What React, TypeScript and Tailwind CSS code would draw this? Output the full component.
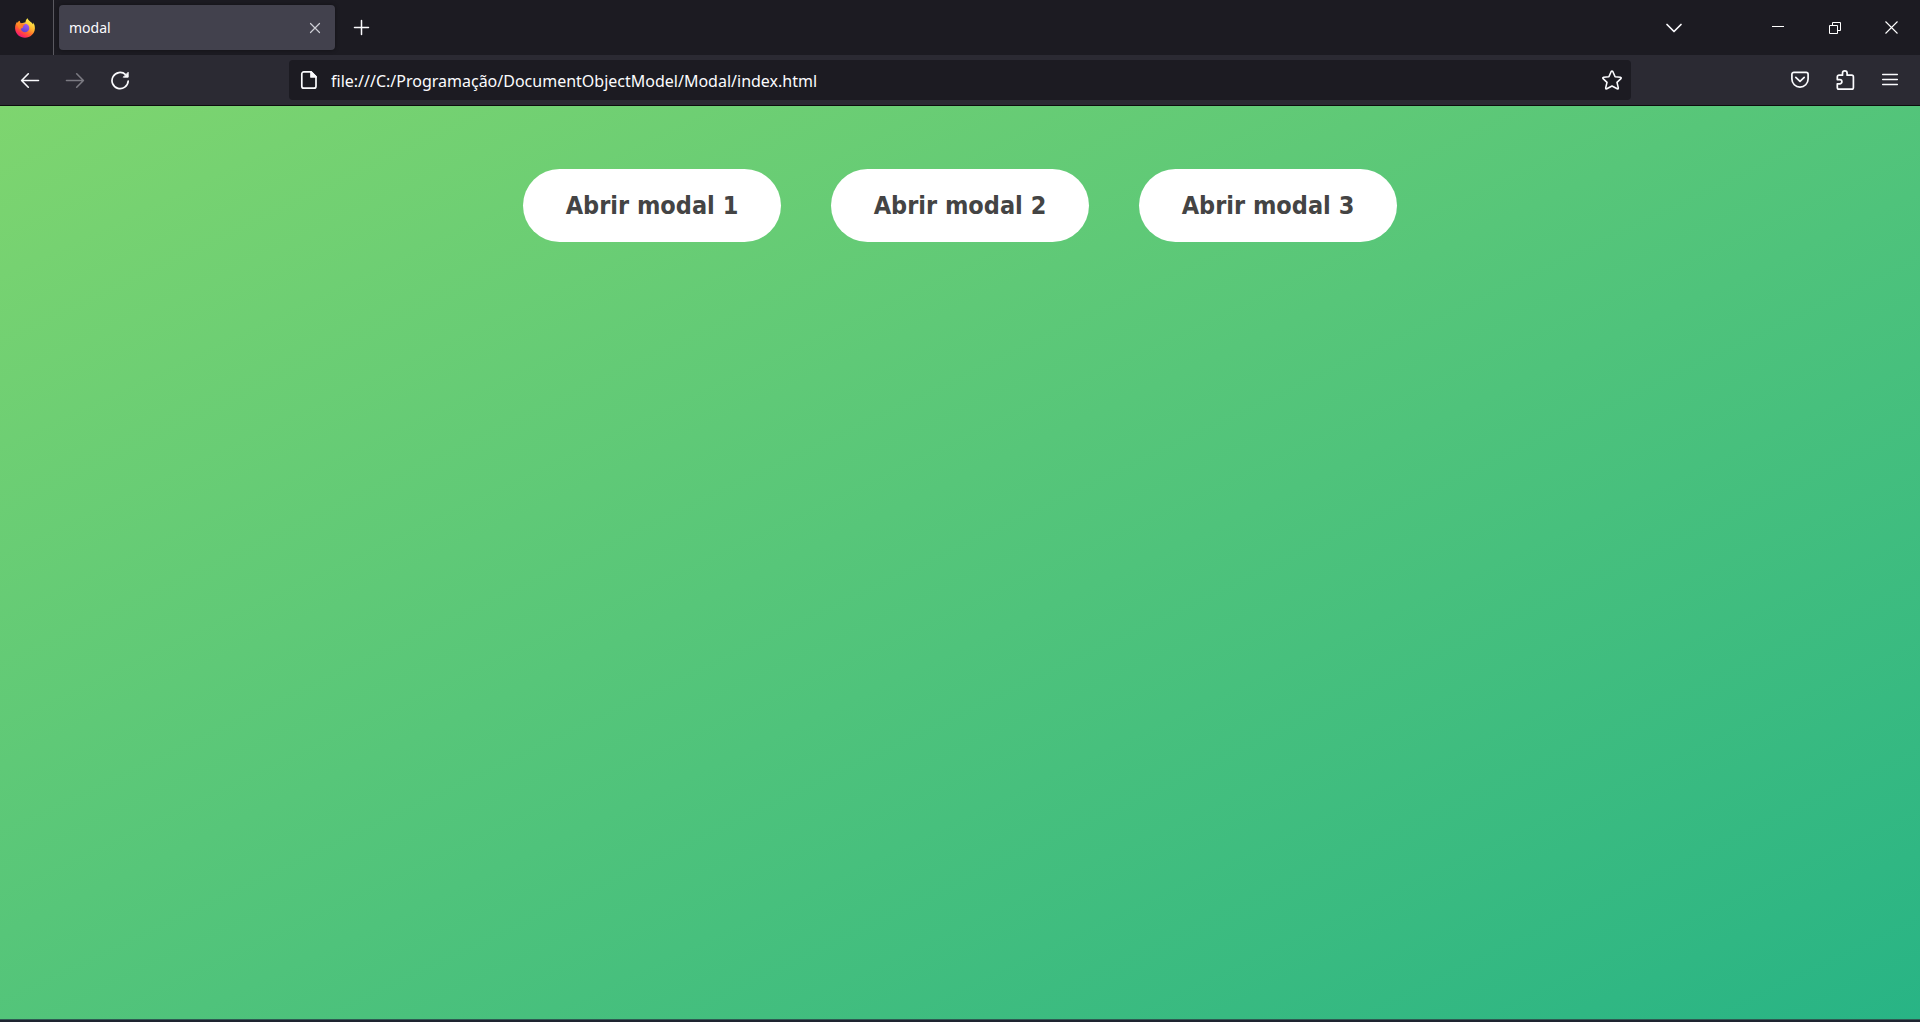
import React from "react";

const navButton = "flex h-10 w-[45px] items-center justify-center rounded text-[#fbfbfe] hover:bg-white/10";
const windowButton = "flex h-full w-[57px] items-center justify-center text-white hover:bg-white/10";

function FirefoxLogo() {
  return (
    <svg width="20" height="20" viewBox="0 0 20 20" aria-hidden="true">
      <defs>
        <linearGradient id="flame" x1="0.8" y1="0.1" x2="0.25" y2="1">
          <stop offset="0" stopColor="#fff44f" />
          <stop offset="0.35" stopColor="#ffb52e" />
          <stop offset="0.6" stopColor="#ff6a2b" />
          <stop offset="0.82" stopColor="#ff2f55" />
          <stop offset="1" stopColor="#e31587" />
        </linearGradient>
        <linearGradient id="globe" x1="0.7" y1="0" x2="0.3" y2="1">
          <stop offset="0" stopColor="#a45cf5" />
          <stop offset="1" stopColor="#5b3fd0" />
        </linearGradient>
        <linearGradient id="tail" x1="0" y1="0" x2="1" y2="1">
          <stop offset="0" stopColor="#ff9a1f" />
          <stop offset="1" stopColor="#ff6633" />
        </linearGradient>
      </defs>
      <path
        fill="url(#flame)"
        d="M12.6 0.2c-1.3 0.9-2 2.4-2.1 4L5.8 5.4C5 4.700 4.700 3.700 4.800 2.700 3.700 3.200 2.900 4.100 2.400 5L2.100 3.800C0.700 5.600 0 8 0.100 10.400 0.400 15.700 4.700 19.700 10 19.700s9.600-4.100 9.900-9.300c0.100-2.500-0.600-4.600-1.900-6 0.200 0.900 0.200 1.600 0.100 2.100C17 3.800 13.200 3.200 12.600 0.200z"
      />
      <circle cx="10" cy="10" r="4.300" fill="url(#globe)" />
      <path
        fill="url(#tail)"
        d="M4.800 2.700C4.700 3.700 5 4.700 5.800 5.400c0.900-0.200 1.800 0 2.600 0.400 0.500 0.200 1.400 0.100 1.500 0.500 0 0.800-1.700 1.200-1.900 1.900-0.200 0.800 0.300 1.500-0.700 1.700-1 0.200-1.900 0.500-2.200 1.600C3.600 10.500 2.500 8 2.400 5 2.900 4.100 3.700 3.200 4.800 2.700z"
      />
    </svg>
  );
}

type StrokeProps = {
  width?: number;
  height?: number;
  box: string;
  stroke?: number;
  children: React.ReactNode;
};

function Stroke({ width = 20, height = 20, box, stroke = 1.5, children }: StrokeProps) {
  return (
    <svg
      width={width}
      height={height}
      viewBox={box}
      fill="none"
      stroke="currentColor"
      strokeWidth={stroke}
      strokeLinecap="round"
      strokeLinejoin="round"
      aria-hidden="true"
    >
      {children}
    </svg>
  );
}

function TabStrip() {
  return (
    <header className="flex h-[55px] items-center bg-[#1c1b22] text-[#fbfbfe]">
      <button type="button" aria-label="Firefox" className="flex h-full w-[54px] items-center justify-center border-r border-[#5a5960] pr-[3px]">
        <FirefoxLogo />
      </button>
      <div className="ml-[5px] flex h-[45px] w-[276px] items-center justify-between rounded bg-[#42414d] pr-[7px] pl-[10px] shadow-[0_0_4px_rgba(0,0,0,0.4)]">
        <span className="text-[14px] leading-5">modal</span>
        <button type="button" aria-label="Fechar aba" className="flex size-[26px] items-center justify-center text-[#cfcfd6]">
          <Stroke width={12} height={12} box="0 0 12 12" stroke={1.2}>
            <path d="M1.500 1.500l9 9M10.500 1.500l-9 9" />
          </Stroke>
        </button>
      </div>
      <button type="button" aria-label="Nova aba" className="ml-1 flex h-10 w-11 items-center justify-center">
        <Stroke width={17} height={17} box="0 0 17 17">
          <path d="M8.500 1.500v14M1.500 8.500h14" />
        </Stroke>
      </button>
      <div className="ml-auto flex h-full items-center">
        <button type="button" aria-label="Listar abas" className="mr-[53px] flex h-10 w-11 items-center justify-center">
          <Stroke width={18} height={10} box="0 0 18 10" stroke={1.700}>
            <path d="M2 1.500l7 7 7-7" />
          </Stroke>
        </button>
        <button type="button" aria-label="Minimizar" className={windowButton}>
          <svg width="12" height="13" viewBox="0 0 12 13" aria-hidden="true">
            <path d="M0 5h12v1H0z" fill="currentColor" />
          </svg>
        </button>
        <button type="button" aria-label="Restaurar" className={windowButton}>
          <svg width="12" height="12" viewBox="0 0 12 12" fill="none" stroke="currentColor" aria-hidden="true">
            <path d="M0.500 3.500h8v8h-8zM3.500 3.500v-3h8v8h-3" />
          </svg>
        </button>
        <button type="button" aria-label="Fechar" className={windowButton}>
          <svg width="13" height="13" viewBox="0 0 13 13" stroke="currentColor" strokeWidth="1.1" aria-hidden="true">
            <path d="M0.500 0.500l12 12M12.500 0.500l-12 12" />
          </svg>
        </button>
      </div>
    </header>
  );
}

function NavBar() {
  return (
    <nav className="grid h-[51px] grid-cols-[1fr_minmax(0,1342px)_1fr] items-center border-b border-[#0c0c0d] bg-[#2b2a33] px-[7px]">
      <div className="flex">
        <button type="button" aria-label="Voltar" className={navButton}>
          <Stroke box="0 0 20 20" stroke={1.600}>
            <path d="M1.800 10.500h16.700M8.300 3.800L1.600 10.500l6.700 6.700" />
          </Stroke>
        </button>
        <button type="button" aria-label="Avançar" disabled className="flex h-10 w-[45px] items-center justify-center text-[#7b7a82]">
          <Stroke box="0 0 20 20" stroke={1.600}>
            <path d="M1.500 10.500h16.700M11.700 3.800l6.700 6.700-6.700 6.700" />
          </Stroke>
        </button>
        <button type="button" aria-label="Recarregar" className={navButton}>
          <Stroke box="0 0 20 20" stroke={1.700}>
            <path d="M18.200 11a8.100 8.100 0 1 1-2.600-6.400" />
            <path d="M18.200 2.600v4.600h-4.600z" fill="currentColor" strokeWidth="0.900" />
          </Stroke>
        </button>
      </div>
      <div className="flex h-10 items-center rounded bg-[#1c1b22] pr-[9px] pl-[11px] text-[#fbfbfe]">
        <Stroke width={18} height={20} box="0 0 18 20" stroke={1.700}>
          <path d="M3.800 1.900h7.200l5 5v9.300a2 2 0 0 1-2 2H3.800a2 2 0 0 1-2-2V3.900a2 2 0 0 1 2-2z" />
          <path d="M11 1.900v5h5z" fill="currentColor" />
        </Stroke>
        <input
          type="text"
          aria-label="Endereço"
          defaultValue="file:///C:/Programação/DocumentObjectModel/Modal/index.html"
          className="ml-[13px] h-7 min-w-0 flex-1 bg-transparent pt-[2px] text-[16px] leading-6 outline-none"
        />
        <button type="button" aria-label="Adicionar aos favoritos" className="flex size-5 items-center justify-center">
          <Stroke box="0 0 20 20" stroke={1.600}>
            <path d="M9.200 1.500q0.800-1.100 1.600 0l2.300 5.300 5.300 0.500q1.300 0.300 0.500 1.400l-3.900 3.700 1.300 5.500q0.100 1.300-1.100 0.900L10 16l-5.200 2.800q-1.200 0.400-1.100-0.900L5 12.400 1.100 8.700q-0.800-1.100 0.500-1.400l5.300-0.500z" />
          </Stroke>
        </button>
      </div>
      <div className="flex justify-end pr-px">
        <button type="button" aria-label="Salvar no Pocket" className={navButton}>
          <Stroke box="0 0 20 20" stroke={1.700}>
            <path d="M3.900 2.300h12.200a2 2 0 0 1 2 2V9a8.100 8.100 0 0 1-16.200 0V4.300a2 2 0 0 1 2-2z" />
            <path d="M5.800 7.300l4.200 4 4.200-4" />
          </Stroke>
        </button>
        <button type="button" aria-label="Extensões" className={navButton}>
          <Stroke box="0 0 20 20" stroke={1.700}>
            <path d="M7.500 5.200V3.200a2.300 2.300 0 0 1 4.600 0v2h4.600a1.700 1.700 0 0 1 1.700 1.700v10.500a1.700 1.700 0 0 1-1.700 1.700H4a1.700 1.700 0 0 1-1.700-1.700v-3.600h2.500a2.100 2.100 0 0 0 0-4.200H2.300V6.900A1.700 1.700 0 0 1 4 5.200z" />
          </Stroke>
        </button>
        <button type="button" aria-label="Abrir menu" className={navButton}>
          <Stroke box="0 0 20 20" stroke={1.500}>
            <path d="M2.700 4.500h14.600M2.700 9.500h14.600M2.700 14.500h14.600" />
          </Stroke>
        </button>
      </div>
    </nav>
  );
}

export default function App() {
  return (
    <div className="flex min-h-screen flex-col font-['Noto_Sans',sans-serif]">
      <TabStrip />
      <NavBar />
      <main className="flex flex-1 flex-wrap content-start justify-center gap-[50px] bg-[linear-gradient(to_bottom_right,#7ed56f,#28b485)] pt-[63px]">
        {[1, 2, 3].map((n) => (
          <button
            key={n}
            type="button"
            className="min-w-[258px] rounded-full bg-white px-10 py-5 font-['DejaVu_Sans_Condensed','Noto_Sans',sans-serif] text-[25px] leading-[33px] font-bold text-[#444]"
          >
            Abrir modal {n}
          </button>
        ))}
      </main>
      <footer className="h-[3px] border-t border-[#2f5a52] bg-[#1e2430]" />
    </div>
  );
}
